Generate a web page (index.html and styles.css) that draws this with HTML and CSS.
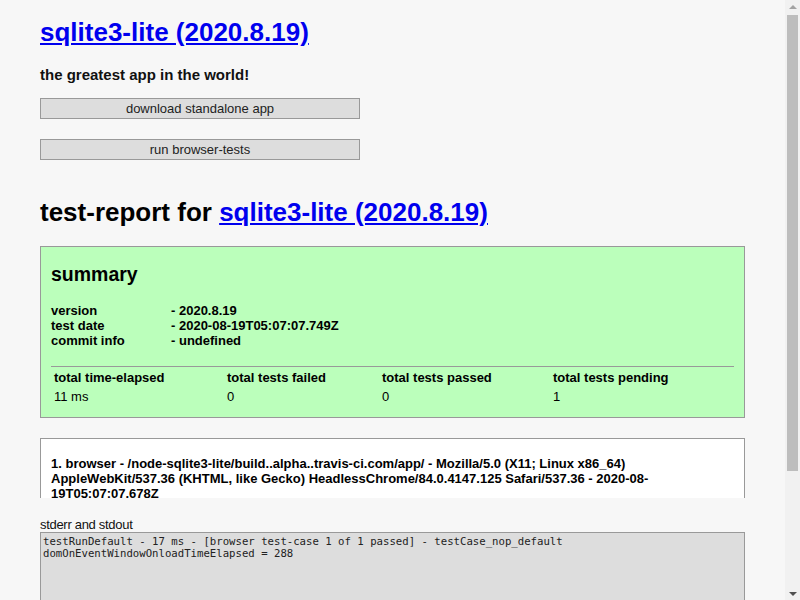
FILE: index.html
```html
<!DOCTYPE html>
<html>
<head>
<meta charset="utf-8">
<title>sqlite3-lite test report</title>
<link rel="stylesheet" href="styles.css">
</head>
<body>
<div class="page">
<h1 class="title"><a href="#">sqlite3-lite (2020.8.19)</a></h1>
<h3 class="tagline">the greatest app in the world!</h3>
<div class="actions">
  <button class="btn">download standalone app</button>
  <button class="btn">run browser-tests</button>
</div>
<h1 class="report-title">test-report for <a href="#">sqlite3-lite (2020.8.19)</a></h1>
<div class="summary">
  <h2 class="summary-title">summary</h2>
  <div class="meta">
    <div class="meta-row"><span class="meta-key">version</span><span>- 2020.8.19</span></div>
    <div class="meta-row"><span class="meta-key">test date</span><span>- 2020-08-19T05:07:07.749Z</span></div>
    <div class="meta-row"><span class="meta-key">commit info</span><span>- undefined</span></div>
  </div>
  <div class="totals">
    <div class="th">total time-elapsed</div>
    <div class="th">total tests failed</div>
    <div class="th">total tests passed</div>
    <div class="th">total tests pending</div>
    <div class="td">11 ms</div>
    <div class="td">0</div>
    <div class="td">0</div>
    <div class="td">1</div>
  </div>
</div>
<div class="platform">
  <h4 class="platform-title">1. browser - /node-sqlite3-lite/build..alpha..travis-ci.com/app/ - Mozilla/5.0 (X11; Linux x86_64) AppleWebKit/537.36 (KHTML, like Gecko) HeadlessChrome/84.0.4147.125 Safari/537.36 - 2020-08-19T05:07:07.678Z</h4>
</div>
<div class="output">
  <label class="output-label">stderr and stdout</label>
  <pre class="output-pre">testRunDefault - 17 ms - [browser test-case 1 of 1 passed] - testCase_nop_default
domOnEventWindowOnloadTimeElapsed = 288
</pre>
</div>
</div>
<div class="scrollbar" aria-hidden="true">
  <div class="sb-arrow sb-up"></div>
  <div class="sb-track"><div class="sb-thumb"></div></div>
  <div class="sb-arrow sb-down"></div>
</div>
</body>
</html>
```

FILE: styles.css
```css
html, body {
  background: #f7f7f7;
  height: 100%;
  overflow: hidden;
}
body {
  margin: 0;
  display: flex;
  font-family: "Liberation Sans", Arial, sans-serif;
  color: #000;
}
.page {
  flex: 1;
  min-width: 0;
  padding: 0 40px 20px 40px;
}
a {
  color: #00e;
}
.title {
  font-size: 26px;
  font-weight: bold;
  margin: 0;
  padding-top: 17px;
  line-height: 30px;
}
.tagline {
  font-size: 15px;
  font-weight: bold;
  margin: 19px 0 0 0;
  line-height: 17px;
  color: #111;
}
.actions {
  display: flex;
  flex-direction: column;
  align-items: flex-start;
  gap: 20px;
  margin-top: 15px;
}
.btn {
  width: 320px;
  height: 21px;
  margin: 0;
  padding: 0;
  background: #ddd;
  border: 1px solid #999;
  font-family: "Liberation Sans", Arial, sans-serif;
  font-size: 13px;
  color: #222;
  line-height: 19px;
}
.report-title {
  font-size: 26px;
  font-weight: bold;
  margin: 37px 0 0 0;
  line-height: 30px;
}
.summary {
  margin-top: 19px;
  background: #bfb;
  border: 1px solid #999;
  padding: 10px 10px 13px 10px;
}
.summary-title {
  font-size: 19.5px;
  font-weight: bold;
  margin: 5px 0 0 0;
  line-height: 24px;
}
.meta {
  margin-top: 17px;
  font-size: 13px;
  font-weight: bold;
  line-height: 15px;
}
.meta-row {
  display: flex;
}
.meta-key {
  width: 120px;
}
.totals {
  margin-top: 18px;
  border-top: 1px solid #999;
  display: grid;
  grid-template-columns: 173px 155px 171px 1fr;
  padding: 3px 3px 0 3px;
  font-size: 13px;
  line-height: 15px;
  row-gap: 4px;
}
.th {
  font-weight: bold;
}
.platform {
  margin-top: 20px;
  background: #fff;
  border: 1px solid #999;
  border-bottom: none;
  height: 59px;
  overflow: hidden;
  padding: 0 10px;
}
.platform-title {
  margin: 17px 0 0 0;
  font-size: 13px;
  font-weight: bold;
  line-height: 15px;
}
.output {
  margin-top: 19px;
}
.output-label {
  display: block;
  font-size: 13px;
  line-height: 15px;
  color: #111;
  letter-spacing: -0.3px;
}
.output-pre {
  margin: 0;
  background: #ddd;
  border: 1px solid #999;
  padding: 3px 2px 2px 2px;
  height: 190px;
  font-family: "DejaVu Sans Mono", "Liberation Mono", monospace;
  font-size: 10.67px;
  line-height: 12px;
  color: #222;
  overflow: hidden;
}
.scrollbar {
  flex: none;
  width: 15px;
  height: 600px;
  background: #f1f1f1;
  display: flex;
  flex-direction: column;
}
.sb-arrow {
  height: 15px;
  flex: none;
  display: flex;
  align-items: center;
  justify-content: center;
}
.sb-up::before {
  content: "";
  width: 0;
  height: 0;
  border-left: 4px solid transparent;
  border-right: 4px solid transparent;
  border-bottom: 4px solid #a3a3a3;
  margin-top: -2px;
}
.sb-down::before {
  content: "";
  width: 0;
  height: 0;
  border-left: 4px solid transparent;
  border-right: 4px solid transparent;
  border-top: 4px solid #505050;
  margin-top: 2px;
}
.sb-track {
  flex: 1;
}
.sb-thumb {
  width: 11px;
  margin-left: 2px;
  height: 456px;
  background: #bdbdbd;
}
```
